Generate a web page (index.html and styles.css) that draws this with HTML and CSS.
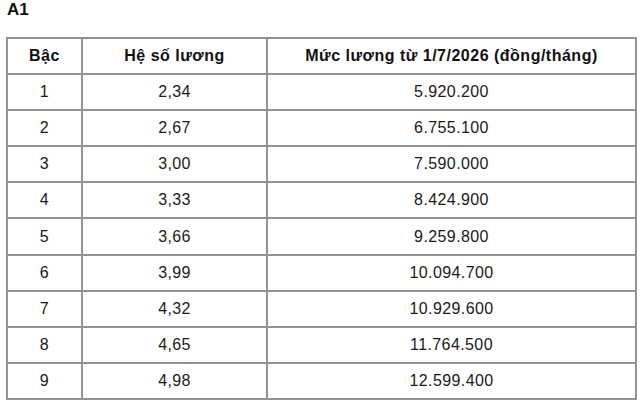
FILE: index.html
```html
<!DOCTYPE html>
<html lang="vi">
<head>
<meta charset="utf-8">
<link rel="stylesheet" href="styles.css">
</head>
<body>
<div class="page">
  <h1 class="title">A1</h1>
  <table class="salary">
    <colgroup>
      <col class="c1"><col class="c2"><col class="c3">
    </colgroup>
    <thead>
      <tr><th>Bậc</th><th>Hệ số lương</th><th>Mức lương từ 1/7/2026 (đồng/tháng)</th></tr>
    </thead>
    <tbody>
      <tr><td>1</td><td>2,34</td><td>5.920.200</td></tr>
      <tr><td>2</td><td>2,67</td><td>6.755.100</td></tr>
      <tr><td>3</td><td>3,00</td><td>7.590.000</td></tr>
      <tr><td>4</td><td>3,33</td><td>8.424.900</td></tr>
      <tr><td>5</td><td>3,66</td><td>9.259.800</td></tr>
      <tr><td>6</td><td>3,99</td><td>10.094.700</td></tr>
      <tr><td>7</td><td>4,32</td><td>10.929.600</td></tr>
      <tr><td>8</td><td>4,65</td><td>11.764.500</td></tr>
      <tr><td>9</td><td>4,98</td><td>12.599.400</td></tr>
    </tbody>
  </table>
</div>
</body>
</html>
```
FILE: styles.css
```css
html, body {
  margin: 0;
  padding: 0;
  background: #ffffff;
}
.page {
  padding: 0 0 0 6px;
  font-family: "Liberation Sans", Arial, sans-serif;
  color: #1a1a1a;
}
.title {
  margin: 0;
  padding: 1px 0 0 1px;
  height: 36px;
  font-size: 17px;
  line-height: 18px;
  font-weight: bold;
  color: #111;
}
.salary {
  border-collapse: collapse;
  width: 629px;
  table-layout: fixed;
}
.c1 { width: 75px; }
.c2 { width: 185px; }
.c3 { width: 369px; }
.salary th,
.salary td {
  border: 2px solid #939393;
  height: 34.1px;
  padding: 0;
  text-align: center;
  vertical-align: middle;
  font-size: 16px;
}
.salary th {
  font-weight: bold;
  letter-spacing: 0.5px;
  color: #111;
}
.salary td {
  font-weight: normal;
  letter-spacing: 0.4px;
  color: #1a1a1a;
}
```
